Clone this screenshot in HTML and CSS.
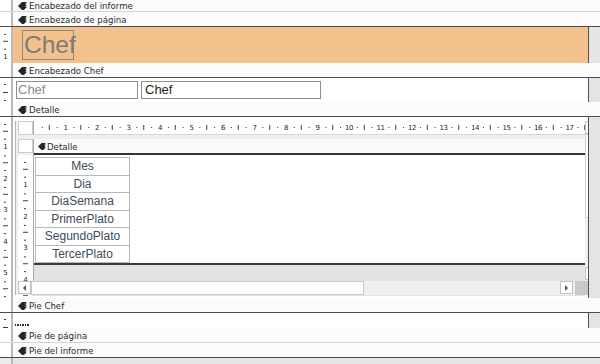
FILE: index.html
```html
<!DOCTYPE html>
<html lang="es">
<head>
  <meta charset="UTF-8" />
  <title>Informe Chef - Vista Diseño</title>
  <link rel="stylesheet" href="styles.css">
</head>
<body>
  <div class="designer">
    <div class="row band first">
      <div class="vr"></div>
      <div class="bar"><svg class="grip" viewBox="0 0 9 8"><path d="M0 4 L4 0 H9 L7 1.6 H9 L7 3.2 H9 L7 4.8 H9 L6 8 H4 Z"/></svg>Encabezado del informe</div>
    </div>
    <div class="row band dark">
      <div class="vr"></div>
      <div class="bar"><svg class="grip" viewBox="0 0 9 8"><path d="M0 4 L4 0 H9 L7 1.6 H9 L7 3.2 H9 L7 4.8 H9 L6 8 H4 Z"/></svg>Encabezado de página</div>
    </div>

    <!-- encabezado de pagina -->
    <div class="row section page-head">
      <div class="vr ruler"><span>1</span></div>
      <div class="sec-body orange">
        <div class="title-label">Chef</div>
      </div>
      <div class="gutter"></div>
    </div>

    <div class="row band dark">
      <div class="vr"></div>
      <div class="bar"><svg class="grip" viewBox="0 0 9 8"><path d="M0 4 L4 0 H9 L7 1.6 H9 L7 3.2 H9 L7 4.8 H9 L6 8 H4 Z"/></svg>Encabezado Chef</div>
    </div>

    <div class="row section chef-head">
      <div class="vr ruler"></div>
      <div class="sec-body">
        <div class="chef-fields">
          <div class="textbox label-box">Chef</div>
          <div class="textbox value-box">Chef</div>
        </div>
      </div>
      <div class="gutter"></div>
    </div>

    <div class="row band dark">
      <div class="vr"></div>
      <div class="bar"><svg class="grip" viewBox="0 0 9 8"><path d="M0 4 L4 0 H9 L7 1.6 H9 L7 3.2 H9 L7 4.8 H9 L6 8 H4 Z"/></svg>Detalle</div>
    </div>

    <!-- detalle con el subinforme -->
    <div class="row section detail">
      <div class="vr ruler"><span>1</span><span>2</span><span>3</span><span>4</span><span>5</span></div>
      <div class="sec-body">
        <div class="subreport">
          <div class="sub-top">
            <div class="sub-main">
              <div class="sub-ruler-row">
                <div class="corner-box"></div>
                <div class="hruler">
                  <span>1</span><span>2</span><span>3</span><span>4</span><span>5</span><span>6</span>
                  <span>7</span><span>8</span><span>9</span><span>10</span><span>11</span><span>12</span>
                  <span>13</span><span>14</span><span>15</span><span>16</span><span>17</span>
                </div>
              </div>
              <div class="sub-area">
                <div class="sub-vcol">
                  <div class="corner-box"></div>
                  <div class="ruler sub-ruler"><span>1</span><span>2</span><span>3</span><span>4</span></div>
                </div>
                <div class="sub-canvas">
                  <div class="inner-bar"><svg class="grip small" viewBox="0 0 9 8"><path d="M0 4 L4 0 H9 L7 1.6 H9 L7 3.2 H9 L7 4.8 H9 L6 8 H4 Z"/></svg>Detalle</div>
                  <div class="canvas-body">
                    <div class="fields">
                      <div class="field">Mes</div>
                      <div class="field">Dia</div>
                      <div class="field">DiaSemana</div>
                      <div class="field">PrimerPlato</div>
                      <div class="field">SegundoPlato</div>
                      <div class="field">TercerPlato</div>
                    </div>
                  </div>
                  <div class="canvas-floor"></div>
                </div>
              </div>
            </div>
            <div class="vscroll">
              <div class="arrow up"></div>
              <div class="thumb"></div>
              <div class="track"></div>
              <div class="arrow down"></div>
            </div>
          </div>
          <div class="hscroll">
            <div class="arrow left"></div>
            <div class="thumb"></div>
            <div class="track"></div>
            <div class="arrow right"></div>
            <div class="corner"></div>
          </div>
        </div>
      </div>
      <div class="gutter"></div>
    </div>

    <div class="row band dark">
      <div class="vr"></div>
      <div class="bar"><svg class="grip" viewBox="0 0 9 8"><path d="M0 4 L4 0 H9 L7 1.6 H9 L7 3.2 H9 L7 4.8 H9 L6 8 H4 Z"/></svg>Pie Chef</div>
    </div>

    <div class="row section chef-foot">
      <div class="vr ruler"></div>
      <div class="sec-body">
        <div class="dots"></div>
      </div>
      <div class="gutter"></div>
    </div>

    <div class="row band">
      <div class="vr"></div>
      <div class="bar"><svg class="grip" viewBox="0 0 9 8"><path d="M0 4 L4 0 H9 L7 1.6 H9 L7 3.2 H9 L7 4.8 H9 L6 8 H4 Z"/></svg>Pie de página</div>
    </div>
    <div class="row band dark">
      <div class="vr"></div>
      <div class="bar"><svg class="grip" viewBox="0 0 9 8"><path d="M0 4 L4 0 H9 L7 1.6 H9 L7 3.2 H9 L7 4.8 H9 L6 8 H4 Z"/></svg>Pie del informe</div>
    </div>

    <div class="rest">
      <div class="vr"></div>
    </div>
  </div>
</body>
</html>
```

FILE: styles.css
```css
:root {
  --tick: #3a3a3a;
  --line: #b9b9b9;
  --dark: #4b4b4b;
  --gray: #e6e6e6;
  --orange: #f3c18c;
}

* {
  margin: 0;
  padding: 0;
  box-sizing: border-box;
}

body {
  width: 600px;
  height: 364px;
  overflow: hidden;
  background: var(--gray);
  font-family: 'DejaVu Sans', sans-serif;
}

.designer {
  display: flex;
  flex-direction: column;
  height: 364px;
}

.row {
  display: flex;
  flex-shrink: 0;
}

.vr {
  width: 13px;
  flex-shrink: 0;
  border-right: 2px solid var(--line);
  background: #fff;
}

/* section bars */
.band {
  height: 15px;
  border-bottom: 1px solid #d4d4d4;
  background: #fbfbfb;
}

.band.dark {
  border-bottom-color: var(--dark);
}

.band.first {
  height: 12px;
}

.bar {
  flex: 1;
  display: flex;
  align-items: center;
  gap: 2px;
  padding: 2px 0 0 5px;
  font-size: 8.6px;
  color: #2b2b2b;
  white-space: nowrap;
}

.band.first .bar {
  padding-top: 0;
}

.grip {
  width: 9px;
  height: 8px;
  fill: #262626;
  flex-shrink: 0;
}

.grip.small {
  width: 8px;
  height: 7px;
}

/* rulers */
.ruler {
  display: flex;
  flex-direction: column;
  overflow: hidden;
  padding-top: 14.75px;
  background-color: #fff;
  background-image:
    linear-gradient(to bottom, transparent 7.4px, var(--tick) 7.4px 8.4px, transparent 8.4px 23.1px, var(--tick) 23.1px 24.1px, transparent 24.1px),
    linear-gradient(to bottom, transparent 15.2px, var(--tick) 15.2px 16.2px, transparent 16.2px);
  background-size: 2px 31.5px, 5px 31.5px;
  background-position: 4px -1px, 3px -1px;
  background-repeat: repeat-y;
}

.ruler span {
  height: 31.5px;
  flex-shrink: 0;
  display: flex;
  align-items: center;
  justify-content: center;
  font-size: 7px;
  line-height: 1;
  color: #222;
}

.hruler {
  flex: 1;
  display: flex;
  overflow: hidden;
  padding-left: 15.75px;
  border-left: 1px solid #a8a8a8;
  border-bottom: 1px solid #d6d6d6;
  background-color: #fff;
  background-image:
    linear-gradient(to right, transparent 7.4px, var(--tick) 7.4px 8.4px, transparent 8.4px 23.1px, var(--tick) 23.1px 24.1px, transparent 24.1px),
    linear-gradient(to right, transparent 15.2px, var(--tick) 15.2px 16.2px, transparent 16.2px);
  background-size: 31.5px 1px, 31.5px 5px;
  background-position: 0 center, 0 center;
  background-repeat: repeat-x;
}

.hruler span {
  width: 31.5px;
  flex-shrink: 0;
  display: flex;
  align-items: center;
  justify-content: center;
  font-size: 7px;
  letter-spacing: -0.5px;
  color: #222;
}

/* sections */
.sec-body {
  width: 575px;
  flex-shrink: 0;
  background: #fff;
}

.gutter {
  flex: 1;
  border-left: 1px solid #505050;
  background: #e4e4e4;
}

.page-head { height: 36px; }
.chef-head { height: 24px; }
.detail { height: 181px; }
.chef-foot { height: 15px; }

.orange {
  background: var(--orange);
}

.title-label {
  width: 52px;
  height: 30px;
  margin: 3px 0 0 9px;
  padding-left: 1px;
  border: 1px solid #8e8a86;
  font-family: 'Liberation Sans', sans-serif;
  font-size: 24.5px;
  line-height: 28px;
  color: #7b7b7b;
}

.chef-fields {
  display: flex;
  gap: 3px;
  padding: 3px 0 0 3px;
}

.textbox {
  height: 18px;
  padding-left: 1px;
  border: 1px solid #8f8f8f;
  font-family: 'Liberation Sans', sans-serif;
  font-size: 13px;
  line-height: 16px;
}

.label-box {
  width: 122px;
  color: #8a8a8a;
}

.value-box {
  width: 180px;
  padding-left: 3px;
  color: #1e1e1e;
}

.dots {
  width: 15px;
  height: 2px;
  margin: 11px 0 0 2px;
  background: repeating-linear-gradient(to right, #2a2a2a 0 1.5px, transparent 1.5px 2.5px);
}

/* subinforme */
.subreport {
  display: flex;
  flex-direction: column;
  height: 174px;
  margin: 4px 0 0 2px;
  border-left: 1px solid #b4b4b4;
  background: #efefef;
}

.sub-top {
  display: flex;
  height: 160px;
}

.sub-main {
  flex: 1;
  display: flex;
  flex-direction: column;
  padding-left: 2px;
}

.sub-ruler-row {
  display: flex;
  height: 14px;
  margin-bottom: 4px;
}

.corner-box {
  width: 15px;
  height: 14px;
  flex-shrink: 0;
  border: 1px solid #cdcdcd;
  background: #fff;
}

.sub-area {
  flex: 1;
  display: flex;
}

.sub-vcol {
  width: 15px;
  display: flex;
  flex-direction: column;
}

.sub-vcol .corner-box {
  margin-bottom: 2px;
}

.sub-ruler {
  flex: 1;
  background-position: 6px -1px, 5px -1px;
}

.sub-canvas {
  flex: 1;
  display: flex;
  flex-direction: column;
  border-left: 1px solid #a8a8a8;
}

.inner-bar {
  height: 16px;
  display: flex;
  align-items: center;
  gap: 1px;
  padding: 1px 0 0 4px;
  border-bottom: 2px solid #333;
  background: #fafafa;
  font-size: 8.6px;
  color: #2b2b2b;
}

.canvas-body {
  height: 108px;
  padding: 2px 0 0 1px;
  background: #fff;
}

.fields {
  width: 95px;
  border: 1px solid #b8b8b8;
  border-bottom: none;
}

.field {
  height: 17.5px;
  border-bottom: 1px solid #b8b8b8;
  text-align: center;
  font-family: 'Liberation Sans', sans-serif;
  font-size: 12px;
  line-height: 17px;
  color: #414b5a;
}

.canvas-floor {
  flex: 1;
  border-top: 2px solid #3a3a3a;
  background: #e3e3e3;
}

/* barras de desplazamiento */
.vscroll {
  width: 13px;
  display: flex;
  flex-direction: column;
  background: #f0f0f0;
}

.vscroll .thumb {
  height: 84px;
  border: 1px solid #cdcdcd;
  background: #fff;
}

.vscroll .track {
  flex: 1;
}

.vscroll .arrow.down {
  margin-bottom: 1px;
}

.arrow {
  width: 13px;
  height: 13px;
  flex-shrink: 0;
  display: flex;
  align-items: center;
  justify-content: center;
  border: 1px solid #c3c3c3;
  background: #fff;
}

.arrow::after {
  content: '';
  border: 3px solid transparent;
}

.arrow.up::after {
  border-bottom: 3px solid #555;
  border-top-width: 0;
}

.arrow.down::after {
  border-top: 3px solid #555;
  border-bottom-width: 0;
}

.arrow.left::after {
  border-right: 3px solid #555;
  border-left-width: 0;
}

.arrow.right::after {
  border-left: 3px solid #555;
  border-right-width: 0;
}

.hscroll {
  height: 14px;
  display: flex;
  padding-left: 2px;
  background: #f0f0f0;
}

.hscroll .arrow {
  height: 13px;
}

.hscroll .thumb {
  width: 333px;
  border: 1px solid #c9c9c9;
  background: #fff;
}

.hscroll .track {
  flex: 1;
}

.hscroll .corner {
  width: 13px;
  margin-left: 2px;
  background: #c8c8cb;
}

.rest {
  flex: 1;
  display: flex;
}

.rest .vr {
  background: #ececec;
}
```
